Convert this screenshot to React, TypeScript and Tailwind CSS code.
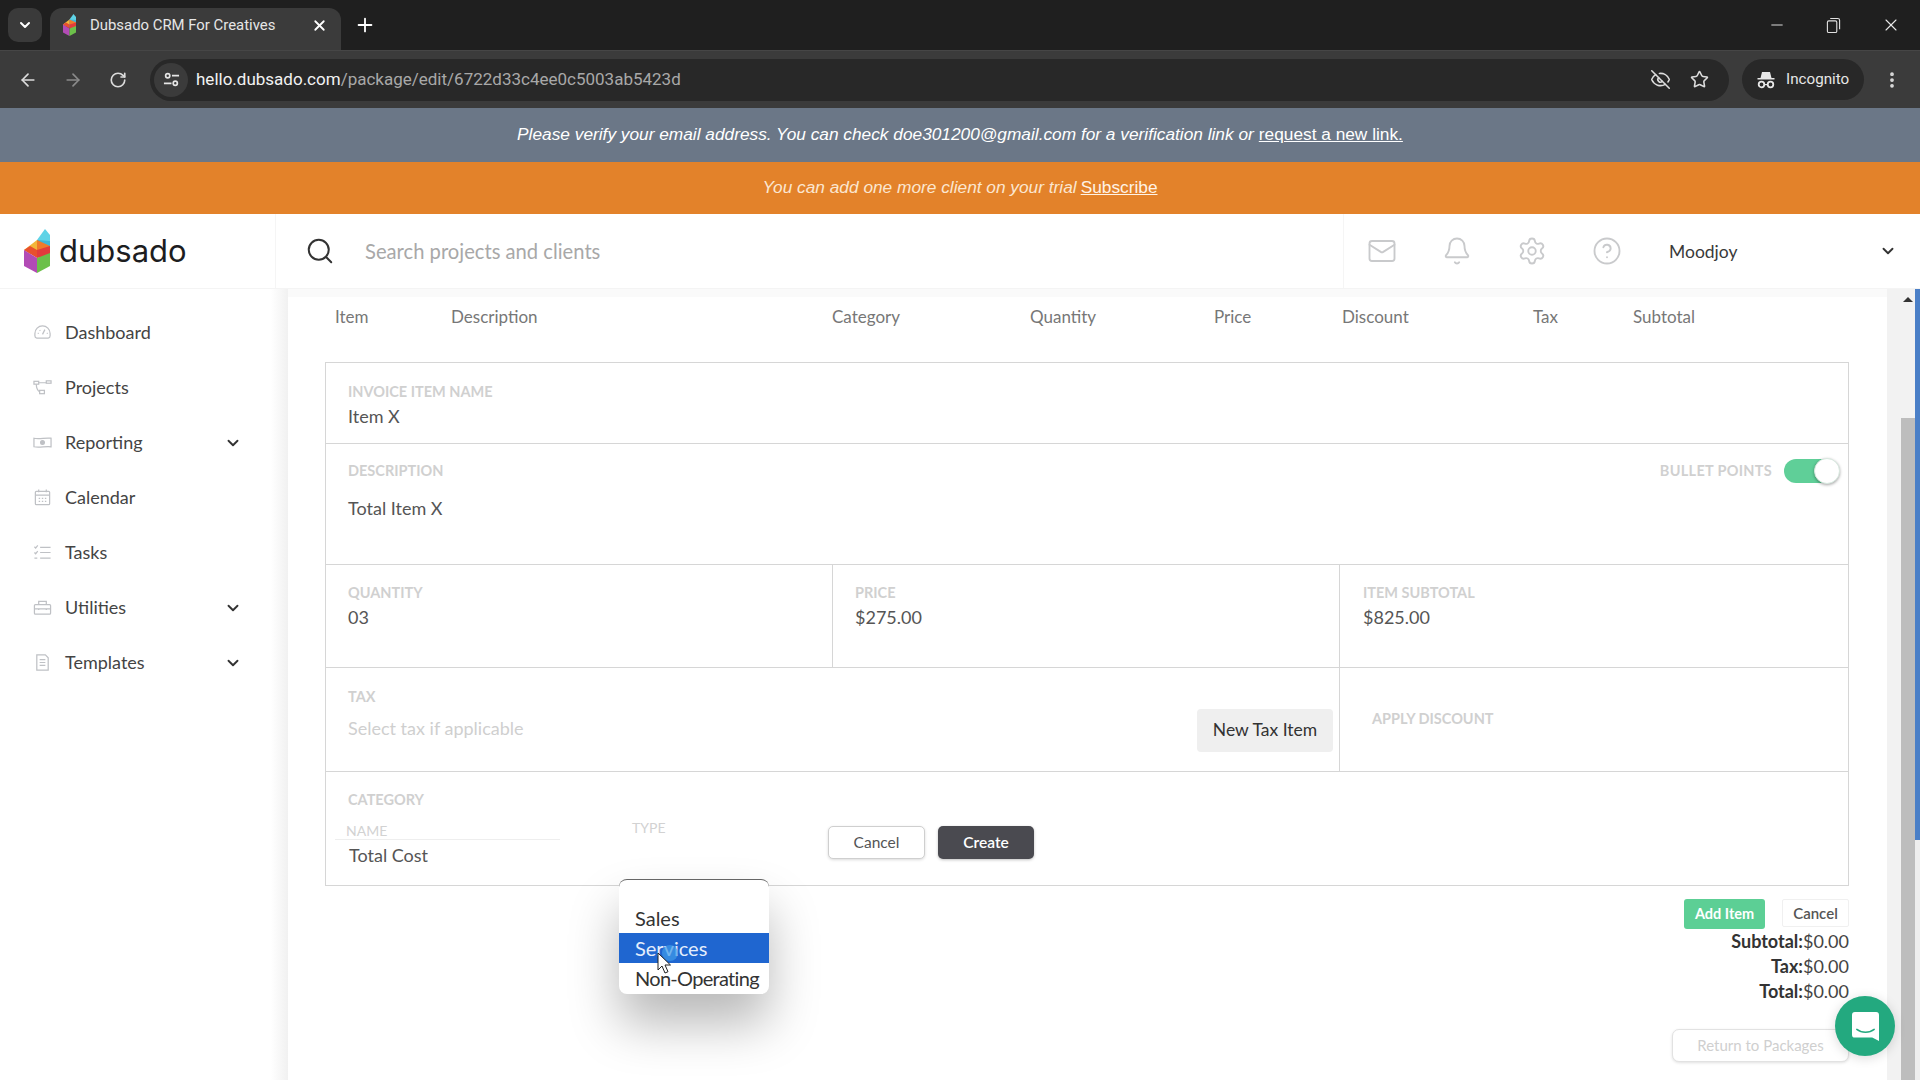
import {
  ArrowLeft,
  ArrowRight,
  Bell,
  ChevronDown,
  CircleHelp,
  EyeOff,
  Mail,
  Minus,
  MoreVertical,
  Plus,
  RotateCw,
  Search,
  Settings,
  Star,
  X,
} from 'lucide-react';

const NAV_ITEMS = [
  { label: 'Dashboard', icon: 'gauge', chevron: false },
  { label: 'Projects', icon: 'flow', chevron: false },
  { label: 'Reporting', icon: 'money', chevron: true },
  { label: 'Calendar', icon: 'calendar', chevron: false },
  { label: 'Tasks', icon: 'tasks', chevron: false },
  { label: 'Utilities', icon: 'toolbox', chevron: true },
  { label: 'Templates', icon: 'doc', chevron: true },
];

const COLUMNS = ['Item', 'Description', 'Category', 'Quantity', 'Price', 'Discount', 'Tax', 'Subtotal'];

function Logo({ className }: { className: string }) {
  return (
    <svg viewBox="0 0 26 44" className={className}>
      <polygon points="21,0 26,6 26,20 13,27 13,11" fill="#5fd3e6" />
      <polygon points="13,11 13,27 26,20 26,12" fill="#3fb6d8" />
      <polygon points="13,11 0,21 6,25 13,21" fill="#f3b63a" />
      <polygon points="13,11 13,21 26,21 26,17" fill="#ef7b2c" />
      <polygon points="0,21 13,29 13,21 6,17" fill="#e8502f" />
      <polygon points="13,21 26,17 26,27 13,29" fill="#e23c3c" />
      <polygon points="0,21 13,29 13,44 0,37" fill="#b24bb5" />
      <polygon points="13,29 26,24 26,37 13,44" fill="#6cc04a" />
    </svg>
  );
}

function NavIcon({ name }: { name: string }) {
  const common = {
    viewBox: '0 0 20 20',
    fill: 'none',
    stroke: '#bfc1c5',
    strokeWidth: 1.3,
    className: 'w-[19px] h-[19px]',
  };
  if (name === 'gauge') {
    return (
      <svg {...common}>
        <path d="M4 16h12a2.5 2.5 0 0 0 2-2.5V11a8 8 0 0 0-16 0v2.500A2.500 2.500 0 0 0 4 16z" />
        <path d="M10 12l2.500-5M5 11h1M14.500 11h1M7 7.500l.7.7" />
      </svg>
    );
  }
  if (name === 'flow') {
    return (
      <svg {...common}>
        <rect x="1" y="3.500" width="5" height="3" />
        <rect x="14" y="3" width="5" height="2.500" />
        <rect x="7" y="13" width="5" height="3.500" />
        <path d="M6 5h8M3.500 6.500c0 4 2 7 3.500 8" />
      </svg>
    );
  }
  if (name === 'money') {
    return (
      <svg {...common}>
        <path d="M1 5.500c6 1.500 12-1 18 0v9c-6-1-12 1.500-18 0z" />
        <circle cx="10" cy="10" r="2" fill="#bfc1c5" />
      </svg>
    );
  }
  if (name === 'calendar') {
    return (
      <svg {...common}>
        <rect x="2.500" y="3.500" width="15" height="14" rx="1" />
        <path d="M2.500 7.500h15M6 1.500v3M14 1.500v3M6 11h1.500M9.300 11h1.500M12.500 11h1.500M6 14h1.500M9.300 14h1.500M12.500 14h1.500" />
      </svg>
    );
  }
  if (name === 'tasks') {
    return (
      <svg {...common}>
        <path d="M1.500 4l1.300 1.300L5 2.500M1.500 10l1.300 1.300L5 8.500M1.500 16h3M7.500 4.500h11M7.500 10h11M7.500 16h11" />
      </svg>
    );
  }
  if (name === 'toolbox') {
    return (
      <svg {...common}>
        <rect x="1.500" y="7" width="17" height="10" rx="1" />
        <path d="M6 7V3.500h8V7M1.500 11.500h17M6 11v1.500M14 11v1.500" />
      </svg>
    );
  }
  return (
    <svg {...common}>
      <path d="M4 2h9l3 3v13H4z" />
      <path d="M7 7h6M7 10h6M7 13h6" />
    </svg>
  );
}

function FieldLabel({ children, className = '' }: { children: string; className?: string }) {
  return (
    <div className={`text-[14.500px] leading-4 font-bold uppercase text-[#d0d0d0] ${className}`}>{children}</div>
  );
}

function FieldValue({ children, className = '' }: { children: string; className?: string }) {
  return <div className={`text-[18px] leading-6 text-[#555] ${className}`}>{children}</div>;
}

function ChromeBar() {
  return (
    <div className="font-['Roboto',sans-serif]">
      {/* Tab strip */}
      <div className="h-[50px] bg-[#1f1f1f] flex items-start pl-2">
        <div className="mt-2 w-[34px] h-[34px] rounded-[10px] bg-[#3a3a3a] flex items-center justify-center">
          <ChevronDown className="w-4 h-4 text-white" strokeWidth={3} />
        </div>
        <div className="mt-2 ml-2 w-[291px] h-[42px] rounded-t-[12px] bg-[#3b3b3b] flex items-center pl-[13px] pr-[13px] pb-[8px]">
          <Logo className="w-[13px] h-[22px] mr-[14px]" />
          <span className="text-[14.900px] text-[#e6e6e6] whitespace-nowrap mt-[1px]">Dubsado CRM For Creatives</span>
          <X className="w-[17px] h-[17px] text-white ml-auto" strokeWidth={2.5} />
        </div>
        <Plus className="w-[22px] h-[22px] text-white mt-[14px] ml-[13px]" strokeWidth={2} />
        <div className="ml-auto flex items-center h-[50px]">
          <div className="w-[56px] flex justify-center">
            <Minus className="w-[18px] h-[18px] text-[#e0e0e0]" strokeWidth={1.3} />
          </div>
          <div className="w-[56px] flex justify-center">
            <svg viewBox="0 0 16 18" className="w-[15px] h-[17px]" fill="none" stroke="#e0e0e0" strokeWidth="1.2">
              <rect x="1.500" y="4" width="10" height="12.500" rx="1.500" />
              <path d="M4.500 1.500h8a2 2 0 0 1 2 2v9.500" />
            </svg>
          </div>
          <div className="w-[59px] flex justify-center">
            <X className="w-[20px] h-[20px] text-[#e8e8e8]" strokeWidth={1.3} />
          </div>
        </div>
      </div>

      {/* Toolbar */}
      <div className="h-[58px] bg-[#3b3b3b] flex items-center pl-[5px] border-t border-[#464646]">
        <div className="w-[45px] flex justify-center">
          <ArrowLeft className="w-[20px] h-[20px] text-[#dcdcdc]" strokeWidth={2} />
        </div>
        <div className="w-[45px] flex justify-center">
          <ArrowRight className="w-[20px] h-[20px] text-[#8a8a8a]" strokeWidth={2} />
        </div>
        <div className="w-[45px] flex justify-center">
          <RotateCw className="w-[18px] h-[18px] text-[#dcdcdc]" strokeWidth={2.2} />
        </div>
        <div className="ml-[10px] w-[1579px] h-[42px] rounded-full bg-[#282828] flex items-center pl-[4px] pr-[20px]">
          <div className="w-[34px] h-[34px] rounded-full bg-[#3b3b3b] flex items-center justify-center">
            <svg viewBox="0 0 18 18" className="w-[17px] h-[17px]" fill="none" stroke="#e6e6e6" strokeWidth="1.800">
              <circle cx="5" cy="5" r="2.200" />
              <circle cx="13" cy="13" r="2.200" />
              <path d="M9.500 5H17M1 13h8" />
            </svg>
          </div>
          <div className="ml-2 text-[17px] whitespace-nowrap text-[#a8a8a8]">
            <span className="text-[#f2f2f2]">hello.dubsado.com</span>/package/edit/6722d33c4ee0c5003ab5423d
          </div>
          <EyeOff className="w-[21px] h-[21px] text-[#dcdcdc] ml-auto mr-[19px]" strokeWidth={1.800} />
          <Star className="w-[19px] h-[19px] text-[#dcdcdc]" strokeWidth={2} />
        </div>
        <div className="ml-[13px] w-[122px] h-[41px] rounded-full bg-[#282828] flex items-center pl-[14px]">
          <svg viewBox="0 0 20 20" className="w-[20px] h-[20px] mr-[10px]" fill="#e8e8e8">
            <path d="M6 2h8l1.500 6h3v1.500h-17V8h3z" />
            <circle cx="5.500" cy="14.500" r="2.800" fill="none" stroke="#e8e8e8" strokeWidth="1.800" />
            <circle cx="14.500" cy="14.500" r="2.800" fill="none" stroke="#e8e8e8" strokeWidth="1.800" />
            <path d="M8 14h4v1.200H8z" />
          </svg>
          <span className="text-[15.200px] text-[#e6e6e6]">Incognito</span>
        </div>
        <MoreVertical className="w-[20px] h-[20px] text-[#dcdcdc] ml-[18px]" strokeWidth={2.5} />
      </div>
    </div>
  );
}

function TopHeader() {
  return (
    <div className="h-[75px] bg-white flex items-center border-b border-[#f4f4f4] relative z-10">
      <div className="w-[276px] h-full flex items-center pl-[24px] border-r border-[#f5f5f5]">
        <Logo className="w-[26px] h-[44px]" />
        <span className="ml-[9px] text-[31px] leading-none text-[#1d1d1f] font-['Inter',sans-serif] -mt-[1px]">dubsado</span>
      </div>
      <Search className="w-[30px] h-[30px] text-[#333] ml-[29px]" strokeWidth={1.600} />
      <div className="ml-[30px] mt-[1px] text-[20.200px] text-[#a8a8a8]">Search projects and clients</div>
      <div className="ml-auto w-[577px] h-full flex items-center border-l border-[#f5f5f5]">
        <Mail className="ml-[23px] w-[30px] h-[30px] text-[#c9cacc]" strokeWidth={1.500} />
        <Bell className="ml-[45px] w-[30px] h-[30px] text-[#c9cacc]" strokeWidth={1.500} />
        <Settings className="ml-[45px] w-[30px] h-[30px] text-[#c9cacc]" strokeWidth={1.500} />
        <CircleHelp className="ml-[45px] w-[30px] h-[30px] text-[#c9cacc]" strokeWidth={1.500} />
        <span className="ml-[47px] mt-[2px] text-[17.500px] text-[#3a3a3a]">Moodjoy</span>
        <ChevronDown className="w-[18px] h-[18px] text-[#333] ml-auto mr-[23px]" strokeWidth={2.500} />
      </div>
    </div>
  );
}

function Sidebar() {
  return (
    <div className="w-[288px] shrink-0 bg-gradient-to-r from-white from-[94%] to-[#f1f1f1] pt-[16px]">
      {NAV_ITEMS.map(item => (
        <div key={item.label} className="h-[55px] flex items-center pl-[33px] pr-[46px]">
          <div className="w-[32px]">
            <NavIcon name={item.icon} />
          </div>
          <span className="text-[18px] text-[#444]">{item.label}</span>
          {item.chevron && <ChevronDown className="ml-auto w-[18px] h-[18px] text-[#333]" strokeWidth={2.500} />}
        </div>
      ))}
    </div>
  );
}

function ItemForm() {
  return (
    <div className="border border-[#d6d6d6] border-b-[#d6d6d6]">
      {/* Name */}
      <div className="h-[81px] border-b border-[#d6d6d6] pl-[22px] pt-[21px]">
        <FieldLabel>Invoice Item Name</FieldLabel>
        <FieldValue className="mt-[4px]">Item X</FieldValue>
      </div>

      {/* Description */}
      <div className="h-[121px] border-b border-[#d6d6d6] pt-[15px]">
        <div className="h-[24px] pl-[22px] pr-[9px] flex items-center">
          <FieldLabel>Description</FieldLabel>
          <FieldLabel className="ml-auto mr-[12px] tracking-[0.3px]">Bullet Points</FieldLabel>
          <div className="relative w-[55px] h-[24px] rounded-full bg-[#5fcf98]">
            <div className="absolute -right-[1px] -top-[1px] w-[26px] h-[26px] rounded-full bg-white border border-[#d8e8df] shadow-[0_1px_3px_rgba(0,0,0,0.35)]" />
          </div>
        </div>
        <FieldValue className="mt-[13px] ml-[22px]">Total Item X</FieldValue>
      </div>

      {/* Quantity / price / subtotal */}
      <div className="h-[103px] border-b border-[#d6d6d6] flex">
        <div className="w-[507px] border-r border-[#d6d6d6] pl-[22px] pt-[20px]">
          <FieldLabel>Quantity</FieldLabel>
          <FieldValue className="mt-[4px]">03</FieldValue>
        </div>
        <div className="w-[507px] border-r border-[#d6d6d6] pl-[22px] pt-[20px]">
          <FieldLabel>Price</FieldLabel>
          <FieldValue className="mt-[4px]">$275.00</FieldValue>
        </div>
        <div className="flex-1 pl-[23px] pt-[20px]">
          <FieldLabel>Item Subtotal</FieldLabel>
          <FieldValue className="mt-[4px]">$825.00</FieldValue>
        </div>
      </div>

      {/* Tax / discount */}
      <div className="h-[104px] border-b border-[#d6d6d6] flex">
        <div className="w-[1014px] border-r border-[#d6d6d6] pl-[22px] flex justify-between">
          <div className="pt-[21px]">
            <FieldLabel>Tax</FieldLabel>
            <div className="mt-[11px] text-[18px] leading-6 text-[#cfcfcf]">Select tax if applicable</div>
          </div>
          <button className="mt-[41px] mr-[6px] w-[136px] h-[43px] rounded-[4px] bg-[#efefef] text-[17.500px] text-[#333]">
            New Tax Item
          </button>
        </div>
        <div className="flex-1 pl-[32px] pt-[43px]">
          <FieldLabel>Apply Discount</FieldLabel>
        </div>
      </div>

      {/* Category */}
      <div className="h-[113px]">
        <FieldLabel className="pl-[22px] pt-[20px]">Category</FieldLabel>
        <div className="flex pl-[9px]">
          <div className="w-[225px] mt-[15px]">
            <div className="pl-[11px] h-[16px] text-[14px] leading-4 uppercase text-[#d2d2d2] border-b border-[#eeeeee] box-content">Name</div>
            <FieldValue className="mt-[3px] pl-[14px]">Total Cost</FieldValue>
          </div>
          <div className="ml-[72px] w-[196px] mt-[12px] text-[14px] leading-4 uppercase text-[#d2d2d2]">Type</div>
          <button className="mt-[18px] w-[97px] h-[33px] rounded-[5px] border border-[#cfcfcf] bg-white text-[15.500px] text-[#555] shadow-[0_1px_3px_rgba(0,0,0,0.15)]">
            Cancel
          </button>
          <button className="mt-[18px] ml-[13px] w-[96px] h-[33px] rounded-[5px] bg-[#4a4a50] text-[15.500px] font-semibold text-white shadow-[0_1px_3px_rgba(0,0,0,0.25)]">
            Create
          </button>
        </div>
      </div>
    </div>
  );
}

export default function App() {
  return (
    <div className="relative w-[1920px] h-[1080px] overflow-hidden bg-white font-['Lato',sans-serif] flex flex-col">
      <ChromeBar />

      <div className="h-[54px] shrink-0 bg-[#6b7787] flex items-center justify-center font-['Liberation_Sans',sans-serif] text-[17.300px] italic text-white">
        <span>Please verify your email address. You can check doe301200@gmail.com for a verification link or </span>
        <span className="underline not-italic ml-[5px]">request a new link.</span>
      </div>
      <div className="h-[52px] shrink-0 bg-[#e3822a] flex items-center justify-center font-['Liberation_Sans',sans-serif] text-[17.300px] italic text-[#fbe6d0]">
        <span>You can add one more client on your trial</span>
        <span className="underline not-italic ml-[4px] text-[#fff3e6]">Subscribe</span>
      </div>

      <TopHeader />

      <div className="flex-1 flex min-h-0">
        <Sidebar />

        <div className="flex-1 min-w-0 pl-[37px] pr-[38px] border-t-[8px] border-[#fafafa] overflow-hidden">
          <div className="h-[65px] grid grid-cols-[116px_381px_198px_184px_128px_191px_100px_1fr] pl-[10px] pt-[8px] text-[17px] leading-6 text-[#777]">
            {COLUMNS.map(c => (
              <div key={c}>{c}</div>
            ))}
          </div>

          <ItemForm />

          <div className="flex justify-end items-start mt-[13px]">
            <button className="w-[81px] h-[30px] rounded-[3px] bg-[#5ccf95] text-[14.500px] font-bold text-white">Add Item</button>
            <button className="ml-[17px] w-[67px] h-[28px] rounded-[2px] border border-[#f0f0f0] bg-white text-[15px] font-semibold text-[#555]">
              Cancel
            </button>
          </div>
          <div className="text-right text-[18px] leading-[25px] text-[#444]">
            <div><span className="font-bold text-[#333]">Subtotal:</span>$0.00</div>
            <div><span className="font-bold text-[#333]">Tax:</span>$0.00</div>
            <div><span className="font-bold text-[#333]">Total:</span>$0.00</div>
          </div>
          <div className="flex justify-end mt-[25px]">
            <button className="w-[177px] h-[33px] rounded-[7px] border border-[#e2e2e2] bg-white text-[15px] text-[#cfcfcf] shadow-[0_1px_3px_rgba(0,0,0,0.12)]">
              Return to Packages
            </button>
          </div>
        </div>

        {/* Scrollbar */}
        <div className="w-[33px] shrink-0 flex">
          <div className="w-[14px] bg-[#f2f2f2]" />
          <div className="w-[14px] flex flex-col bg-[#f2f2f2]">
            <div className="h-[129px] pt-[8px] flex justify-center">
              <div className="w-0 h-0 border-x-[5px] border-x-transparent border-b-[5px] border-b-[#333]" />
            </div>
            <div className="flex-1 bg-[#bdbdbd]" />
          </div>
          <div className="w-[5px] bg-[#eeeeee]" />
        </div>
      </div>

      {/* Native select popup */}
      <div className="absolute left-[619px] top-[879px] w-[150px] h-[115px] rounded-[8px] bg-white border-t border-[#666] shadow-[0_30px_50px_rgba(0,0,0,0.28)] overflow-hidden pt-[23px] text-[20px] leading-[30px] text-[#333]">
        <div className="pl-4">Sales</div>
        <div className="pl-4 bg-[#1f66d0] text-[#e4eefc]">Services</div>
        <div className="pl-4 whitespace-nowrap tracking-[-0.7px]">Non-Operating</div>
      </div>

      {/* Click marker and cursor */}
      <div className="absolute left-[662px] top-[945px] w-[16px] h-[16px] rounded-full bg-[#3f9be8]/70" />
      <svg viewBox="0 0 14 22" className="absolute left-[657px] top-[952px] w-[14px] h-[22px]">
        <path d="M1 1v17l4-4 3 7 3-1.300-3-6.700h5.500z" fill="#fff" stroke="#222" strokeWidth="1" />
      </svg>

      {/* Chat launcher */}
      <div className="absolute left-[1835px] top-[996px] w-[60px] h-[60px] rounded-full bg-[#23a97f] flex items-center justify-center shadow-[0_2px_12px_rgba(0,0,0,0.15)]">
        <svg viewBox="0 0 28 30" className="w-[27px] h-[29px]">
          <path d="M3 0h22a3 3 0 0 1 3 3v27l-7-3.500H3a3 3 0 0 1-3-3V3a3 3 0 0 1 3-3z" fill="#fff" />
          <path d="M5 18c5 4 13 4 18 0" fill="none" stroke="#23a97f" strokeWidth="1.600" strokeLinecap="round" />
        </svg>
      </div>

      {/* Recording frame edge */}
      <div className="absolute left-[1915px] top-[240px] w-[5px] h-[600px] bg-[#4a7fc7]" />
    </div>
  );
}
